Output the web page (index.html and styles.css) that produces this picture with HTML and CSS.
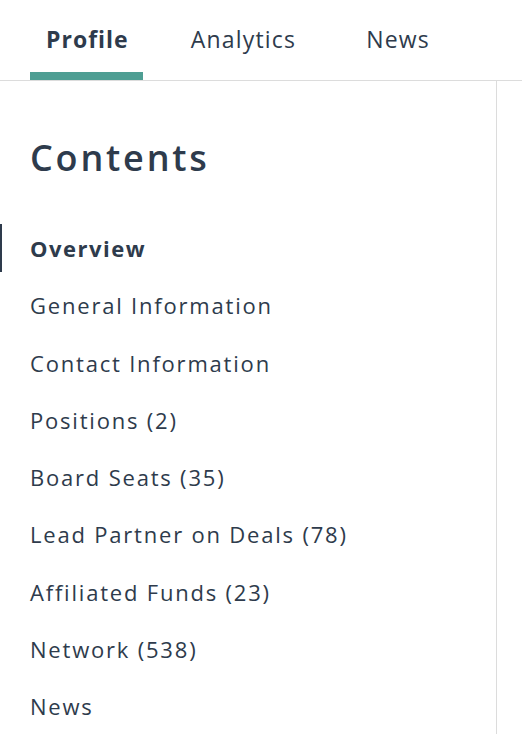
FILE: index.html
```html
<!DOCTYPE html>
<html>
<head>
<meta charset="utf-8">
<link rel="stylesheet" href="styles.css">
</head>
<body>
<nav class="tabs">
  <a class="tab active">Profile</a>
  <a class="tab">Analytics</a>
  <a class="tab tab-last">News</a>
</nav>
<div class="main">
  <aside class="sidebar">
    <h1 class="title">Contents</h1>
    <ul class="toc">
      <li class="item current">Overview</li>
      <li class="item">General Information</li>
      <li class="item">Contact Information</li>
      <li class="item">Positions (2)</li>
      <li class="item">Board Seats (35)</li>
      <li class="item">Lead Partner on Deals (78)</li>
      <li class="item">Affiliated Funds (23)</li>
      <li class="item">Network (538)</li>
      <li class="item">News</li>
    </ul>
  </aside>
  <div class="content"></div>
</div>
</body>
</html>
```
FILE: styles.css
```css
html, body {
  margin: 0;
  padding: 0;
  background: #fff;
}
body {
  font-family: "Open Sans", sans-serif;
  color: #2e3b4c;
  width: 522px;
  height: 734px;
  overflow: hidden;
}
.tabs {
  display: flex;
  padding-left: 30px;
  height: 80px;
  border-bottom: 1px solid #dcdcdc;
  gap: 32px;
}
.tab {
  display: flex;
  align-items: flex-start;
  justify-content: center;
  padding: 23px 16px 0;
  font-size: 23px;
  letter-spacing: 1.2px;
  box-sizing: border-box;
  height: 80px;
}
.tab-last {
  margin-left: 6px;
}
.tab.active {
  font-weight: 700;
  letter-spacing: 1px;
  padding-right: 14px;
  border-bottom: 8px solid #4e9e93;
}
.main {
  display: flex;
  height: 653px;
}
.sidebar {
  width: 497px;
  border-right: 1px solid #dcdcdc;
  box-sizing: border-box;
}
.title {
  margin: 52px 0 0 30px;
  font-size: 36px;
  font-weight: 600;
  letter-spacing: 2.8px;
  line-height: 50px;
}
.toc {
  list-style: none;
  margin: 41px 0 0;
  padding: 0;
}
.item {
  height: 57.25px;
  line-height: 48px;
  padding-left: 30px;
  font-size: 22px;
  letter-spacing: 1.8px;
  box-sizing: border-box;
}
.item.current {
  font-weight: 700;
  letter-spacing: 1.5px;
  border-left: 2px solid #2e3b4c;
  padding-left: 28px;
  height: 48px;
  margin-bottom: 9.25px;
}
```
